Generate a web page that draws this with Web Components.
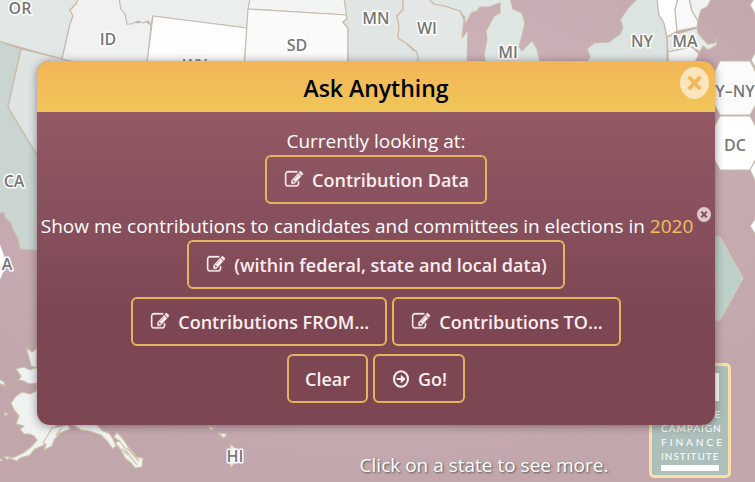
<!DOCTYPE html>
<html lang="en">
<head>
<meta charset="utf-8">
<meta name="viewport" content="width=device-width, initial-scale=1">
<title>Ask Anything</title>
<style>
  html, body { height: 100%; }
  body {
    margin: 0;
    font-family: "Open Sans", "Noto Sans", sans-serif;
  }
</style>
</head>
<body>
<ask-page>
  <state-map slot="map"></state-map>
  <ask-dialog heading="Ask Anything">
    <ask-line>Currently looking at:</ask-line>
    <ask-row><ask-button icon="edit">Contribution Data</ask-button></ask-row>
    <ask-line>Show me contributions to candidates and committees in elections in <filter-value>2020</filter-value></ask-line>
    <ask-row><ask-button icon="edit">(within federal, state and local data)</ask-button></ask-row>
    <ask-row>
      <ask-button icon="edit">Contributions FROM...</ask-button>
      <ask-button icon="edit">Contributions TO...</ask-button>
    </ask-row>
    <ask-row>
      <ask-button>Clear</ask-button>
      <ask-button icon="go">Go!</ask-button>
    </ask-row>
  </ask-dialog>
  <span slot="hint">Click on a state to see more.</span>
  <cfi-logo slot="logo"></cfi-logo>
</ask-page>

<script>
const ICONS = {
  edit: `<svg viewBox="0 128 1792 1536" width="18" height="17" preserveAspectRatio="none" aria-hidden="true"><path fill="currentColor" stroke="currentColor" stroke-width="30" d="M888 1184l116-116-152-152-116 116v56h96v96h56zm440-720q-16-16-33 1l-350 350q-17 17-1 33t33-1l350-350q17-17 1-33zm80 594v190q0 119-84.5 203.5t-203.5 84.5h-832q-119 0-203.5-84.5t-84.5-203.5v-832q0-119 84.5-203.5t203.5-84.5h832q63 0 117 25 15 7 18 23 3 17-9 29l-49 49q-14 14-32 8-23-6-45-6h-832q-66 0-113 47t-47 113v832q0 66 47 113t113 47h832q66 0 113-47t47-113v-126q0-13 9-22l64-64q15-15 35-7t20 29zm-96-738l288 288-672 672h-288v-288zm444 132l-92 92-288-288 92-92q28-28 68-28t68 28l152 152q28 28 28 68t-28 68z"/></svg>`,
  go: `<svg viewBox="0 0 16 18" width="16" height="18" aria-hidden="true"><ellipse cx="8" cy="9" rx="7" ry="7.8" fill="none" stroke="currentColor" stroke-width="2"/><path fill="currentColor" d="M3.6 7.9h4.2V5.6q0-.8.7-.3l3.6 3.3q.4.4 0 .8l-3.6 3.3q-.7.5-.7-.3v-2.3H3.6z"/></svg>`,
};

class AskPage extends HTMLElement {
  constructor() {
    super();
    this.attachShadow({ mode: "open" }).innerHTML = `
      <style>
        :host {
          position: relative;
          display: flex;
          flex-direction: column;
          box-sizing: border-box;
          min-height: 100vh;
          padding: 61px 40px 3px 37px;
          overflow: hidden;
        }
        .map { position: absolute; inset: 0; }
        main { position: relative; z-index: 1; }
        footer {
          position: relative;
          margin-top: auto;
          padding-left: 216px;
          text-align: center;
          font-size: 19px;
          line-height: 28px;
          color: #fff;
          text-shadow: 1px 1px 2px #555;
        }
        .logo { position: absolute; right: 24px; bottom: 4px; }
      </style>
      <div class="map"><slot name="map"></slot></div>
      <div class="logo"><slot name="logo"></slot></div>
      <main><slot></slot></main>
      <footer><slot name="hint"></slot></footer>
    `;
  }
}

class StateMap extends HTMLElement {
  constructor() {
    super();
    const labels = [
      ["OR", 20, 14], ["ID", 108, 45], ["WY", 195, 71], ["SD", 297, 51],
      ["MN", 376, 24], ["WI", 427, 34], ["MI", 508, 58], ["NY", 642, 47],
      ["MA", 685, 47], ["Y–NY", 735, 97], ["DC", 735, 151],
      ["CA", 14, 187], ["A", 7, 270], ["HI", 235, 462],
    ];
    const texts = labels
      .map(([name, x, y]) => `<text x="${x}" y="${y}">${name}</text>`)
      .join("");

    this.attachShadow({ mode: "open" }).innerHTML = `
      <style>
        :host { display: block; height: 100%; }
        svg { display: block; width: 100%; height: 100%; }
        .land { stroke: #c9bbaa; stroke-width: 1.2; stroke-linejoin: round; }
        .isles { fill: #eff2f0; stroke: #cdc0a6; stroke-width: 1.2; stroke-linejoin: round; }
        .labels {
          font-size: 16px;
          font-weight: 600;
          text-anchor: middle;
          fill: #777;
          stroke: #fff;
          stroke-width: 3;
          stroke-linejoin: round;
          paint-order: stroke;
        }
      </style>
      <svg viewBox="0 0 755 482" preserveAspectRatio="xMidYMid slice" role="img" aria-label="Map of the states">
        <defs>
          <radialGradient id="sea" cx=".5" cy=".35" r=".65">
            <stop offset="0" stop-color="#d3bac0"/>
            <stop offset="1" stop-color="#c1a6ab"/>
          </radialGradient>
        </defs>
        <rect width="755" height="482" fill="url(#sea)"/>
        <g class="land">
          <path fill="#e1e7e5" d="M-2-2H79L76 4 70 10 73 16 70 24 62 59-2 41z"/>
          <path fill="#cad4d1" d="M-2 41 21 49 8 107 37 155 60 200V252L20 249 18 239 13 230 10 222 5 218 4 213-2 213z"/>
          <path fill="#dfe4e3" d="M21 49 75 62 80 200H50L37 155 8 107z"/>
          <path fill="#f0f2f1" d="M79-2H119L121 9 125 14 127 24 132 22 138 23 143 21 148 23 151 25 147 70H90L75 62 62 59 70 24 73 16 70 10 76 4z"/>
          <path fill="#eaeeec" d="M119-2H250L247 28 153 16 151 25 148 21 143 23 138 21 132 24 127 24 125 14 121 9z"/>
          <path fill="#fdfdfd" d="M153 16 247 28 244 70H146z"/>
          <path fill="#f3f5f4" d="M250-2H344L347 15 248 9z"/>
          <path fill="#fafafa" d="M248 9 347 15 347 19 343 22 348 28V70H244z"/>
          <path fill="#e1e6e4" d="M344-2H403V10L397 16 399 26 398 38 406 43 413 50 417 52 420 70H348V28L343 22 347 19z"/>
          <path fill="#e3e8e6" d="M403-2H428L434 4 445 6 460 11 464 20 462 38 468 30 467 70H420L417 52 406 43 398 38 399 26 397 16 403 10z"/>
          <path fill="#dfe7e4" d="M428-2H510L513 9 522 13 525 23 522 36 519 47 522 51 532 40 537 49 542 70H487L484 55 487 39 486 31 494 16 500 13V3L489 7 480 7 477 11 471 13 468 20 464 24 465 18 460 11 445 6 434 4z"/>
          <path fill="#dce4e2" d="M638-2H657L659 15 664 23 667 37V70H582L590 57 587 49 594 43 609 42 620 34 623 27 620 20 629 7z"/>
          <path fill="#fff" d="M657-2H678L675 10 677 31 667 37 664 23 659 15z"/>
          <path fill="#f8f9f8" d="M678-2H689L692 11 698 21 697 27 677 31 675 10z"/>
          <path fill="#eff2f1" d="M689-2H712L707 7 701 10 698 21 692 11z"/>
          <path fill="#e5eae8" d="M667 37 697 28 698 33 702 38 708 44 715 43 716 38 717 45 708 50 703 46 700 52 692 47 668 52z"/>
          <path fill="#f3f5f4" d="M668 52 692 47 699 54 694 65H668z"/>
          <path fill="#fbfbfb" d="M720 61H750L765 89 750 115H720L705 89z"/>
          <path fill="#fff" d="M720 116H750L765 143 750 170H720L705 143z"/>
          <path fill="#fff" d="M750 170 765 143V202zM750 5 757-6V17zM750 226 760 212V242zM751 60 760 44V76z"/>
          <path fill="#bdd0c9" stroke="#d4cbbb" d="M700 237H720L743 278 720 320H700z"/>
          <path fill="#fff" stroke="none" d="M-2 239 7 264-2 284z"/>
        </g>
        <g class="isles">
          <path d="M27 348 32 352 37 348V368L31 366 27 350zM16 369 24 367 30 370 37 367 55 365 60 420 53 430 50 438 44 445 35 449 30 455 20 458 17 461 9 458 15 457 23 453 31 447 37 440 34 436 29 434 24 434 20 429 24 426 16 424 19 416 14 410 11 403 16 396 22 392 30 394 36 391 37 383 29 384 24 381 19 380 21 376z"/>
          <path d="M52 428 68 425 70 429 60 433 54 440 52 446 44 450 46 444 43 443z"/>
          <path d="M72 424 96 424 103 431 109 433 113 439 116 446 113 449 107 441 101 435 89 431 81 430z"/>
          <path d="M117 432 123 439 129 448 137 457 143 458 142 467 135 468 131 463 125 458 121 450 115 443 119 441 114 437z"/>
          <path d="M4 456 10 457 7 460zM-1 458 3 460-1 462zM4 412 8 414 5 416zM-1 379 4 382 5 386-1 383z"/>
          <path d="M208 426 214 428 211 430zM218 433 227 434 224 438zM230 444 239 451 243 459 238 460 231 467 228 459 231 451z"/>
          <path fill="none" d="M119 440 130 456 137 465M122 449 128 455M127 448 139 461M62 428 56 435"/>
        </g>
        <g class="labels">${texts}</g>
      </svg>
    `;
  }
}

class AskDialog extends HTMLElement {
  constructor() {
    super();
    this.attachShadow({ mode: "open" }).innerHTML = `
      <style>
        :host { display: block; }
        section {
          border-radius: 13px;
          overflow: hidden;
          background: linear-gradient(#995e6a, #7c4753 70%);
          box-shadow: 0 1px 9px rgba(50, 30, 40, 0.5);
        }
        header {
          position: relative;
          height: 51px;
          background: linear-gradient(#f3b557, #f0c659);
        }
        h1 {
          margin: 0;
          text-align: center;
          font-size: 23px;
          font-weight: 600;
          line-height: 54px;
          color: #000;
        }
        .close {
          position: absolute;
          top: 6px;
          right: 6px;
          padding: 0;
          border: 0;
          background: none;
          cursor: pointer;
        }
        .close svg { display: block; }
        .body {
          display: flex;
          flex-direction: column;
          padding: 15px 1px 22px;
        }
      </style>
      <section role="dialog" aria-labelledby="title">
        <header>
          <h1 id="title"></h1>
          <button class="close" type="button" aria-label="Close">
            <svg viewBox="0 0 29 32" width="29" height="32"><ellipse cx="14.5" cy="16" rx="14.5" ry="16" fill="#fbe5bd"/><path d="M10 11.2 19 20.8M19 11.2 10 20.8" stroke="#f3b85a" stroke-width="3.8" stroke-linecap="square"/></svg>
          </button>
        </header>
        <div class="body"><slot></slot></div>
      </section>
    `;
  }

  connectedCallback() {
    this.shadowRoot.querySelector("h1").textContent = this.getAttribute("heading") || "";
    this.shadowRoot.querySelector(".close").addEventListener("click", () => this.remove());
  }
}

class AskLine extends HTMLElement {
  constructor() {
    super();
    this.attachShadow({ mode: "open" }).innerHTML = `
      <style>
        :host {
          display: block;
          text-align: center;
          font-size: 19px;
          line-height: 28px;
          color: #fff;
        }
      </style>
      <slot></slot>
    `;
  }
}

class AskRow extends HTMLElement {
  constructor() {
    super();
    this.attachShadow({ mode: "open" }).innerHTML = `
      <style>
        :host {
          display: flex;
          flex-wrap: wrap;
          justify-content: center;
          gap: 5px;
          margin-bottom: 8px;
        }
        :host(:last-of-type) { margin-bottom: 0; }
      </style>
      <slot></slot>
    `;
  }
}

class AskButton extends HTMLElement {
  constructor() {
    super();
    this.attachShadow({ mode: "open" });
  }

  connectedCallback() {
    const icon = ICONS[this.getAttribute("icon")] || "";
    this.shadowRoot.innerHTML = `
      <style>
        :host { display: block; }
        button {
          display: flex;
          align-items: center;
          gap: 9px;
          height: 49px;
          padding: 0 16px;
          border: 2px solid #e6b35f;
          border-radius: 6px;
          background: none;
          color: #fdeef0;
          font: 600 18px/28px "Open Sans", "Noto Sans", sans-serif;
          cursor: pointer;
        }
        button:hover { background: rgba(255, 255, 255, 0.1); }
        svg { display: block; margin-left: 2px; overflow: visible; }
      </style>
      <button type="button">${icon}<span><slot></slot></span></button>
    `;
  }
}

class FilterValue extends HTMLElement {
  constructor() {
    super();
    this.attachShadow({ mode: "open" }).innerHTML = `
      <style>
        :host { color: #f2c05b; white-space: nowrap; }
        button {
          display: inline-block;
          height: 15px;
          margin: -12px 0 0 4px;
          padding: 0;
          border: 0;
          background: none;
          line-height: 0;
          vertical-align: 11px;
          cursor: pointer;
        }
        svg { display: block; }
      </style>
      <slot></slot><button type="button" aria-label="Remove"><svg viewBox="0 0 14 15" width="14" height="15"><ellipse cx="7" cy="7.5" rx="7" ry="7.5" fill="#dfc8cc"/><path d="M4.9 5.3 9.1 9.7M9.1 5.3 4.9 9.7" stroke="#854d59" stroke-width="2" stroke-linecap="square"/></svg></button>
    `;
  }
}

class CfiLogo extends HTMLElement {
  constructor() {
    super();
    this.attachShadow({ mode: "open" }).innerHTML = `
      <style>
        :host {
          display: flex;
          flex-direction: column;
          box-sizing: border-box;
          width: 82px;
          height: 115px;
          padding: 7px 9px 4px;
          border: 3px solid #f8e0a6;
          border-radius: 5px;
          background: #adbfba;
          color: #fff;
          font: 10px/14px Lato, "Open Sans", sans-serif;
        }
        .top { height: 30px; background: #fff; margin-bottom: 6px; }
        .word { white-space: nowrap; letter-spacing: 1px; }
        .wide { letter-spacing: 3px; }
        .widest { letter-spacing: 20px; }
        .bottom { height: 7px; background: #fff; margin-top: 2px; }
      </style>
      <div class="top"></div>
      <div class="word widest">THE</div>
      <div class="word">CAMPAIGN</div>
      <div class="word wide">FINANCE</div>
      <div class="word">INSTITUTE</div>
      <div class="bottom"></div>
    `;
  }
}

customElements.define("ask-page", AskPage);
customElements.define("state-map", StateMap);
customElements.define("ask-dialog", AskDialog);
customElements.define("ask-line", AskLine);
customElements.define("ask-row", AskRow);
customElements.define("ask-button", AskButton);
customElements.define("filter-value", FilterValue);
customElements.define("cfi-logo", CfiLogo);
</script>
</body>
</html>
